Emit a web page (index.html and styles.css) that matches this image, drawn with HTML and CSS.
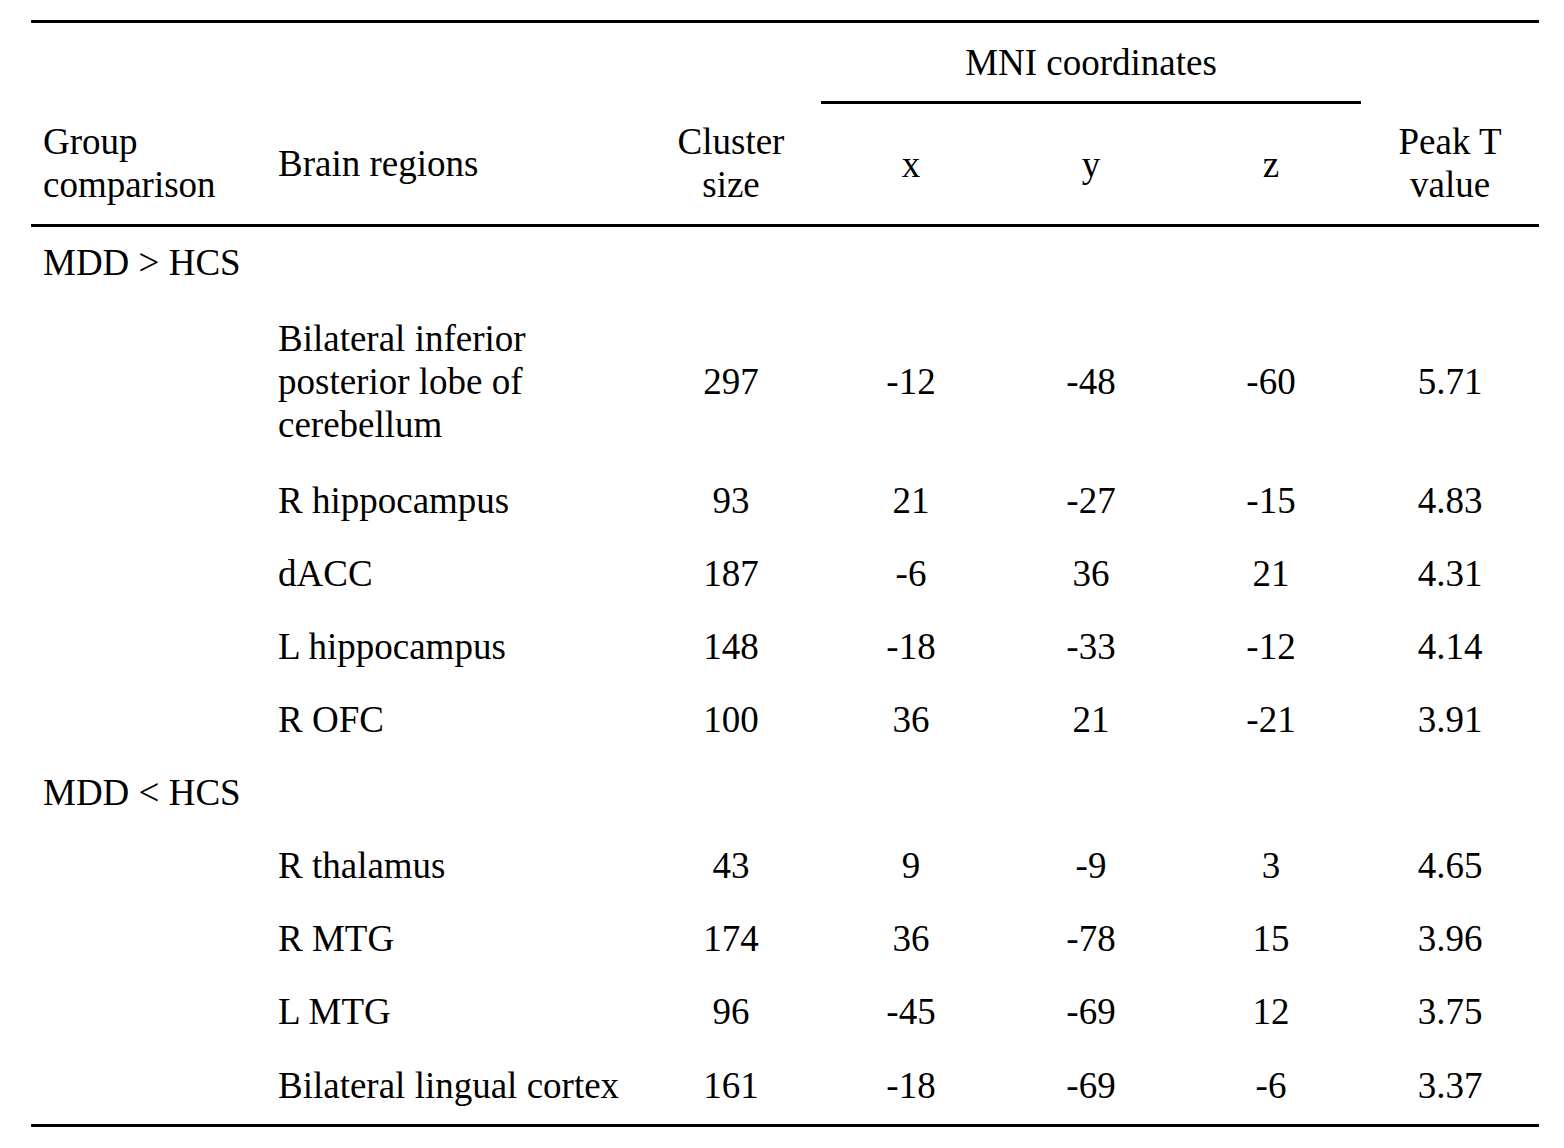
FILE: index.html
```html
<!DOCTYPE html>
<html>
<head>
<meta charset="utf-8">
<link rel="stylesheet" href="styles.css">
</head>
<body>
<table class="results">
  <colgroup>
    <col class="c-group">
    <col class="c-region">
    <col class="c-num">
    <col class="c-num">
    <col class="c-num">
    <col class="c-num">
    <col class="c-peak">
  </colgroup>
  <thead>
    <tr class="head-top">
      <th></th>
      <th></th>
      <th></th>
      <th class="mni" colspan="3">MNI coordinates</th>
      <th></th>
    </tr>
    <tr class="head-sub">
      <th class="left">Group comparison</th>
      <th class="left">Brain regions</th>
      <th>Cluster size</th>
      <th>x</th>
      <th>y</th>
      <th>z</th>
      <th>Peak T value</th>
    </tr>
  </thead>
  <tbody>
    <tr class="group-row">
      <td class="left">MDD &gt; HCS</td>
      <td></td><td></td><td></td><td></td><td></td><td></td>
    </tr>
    <tr class="tall">
      <td></td>
      <td class="left">Bilateral inferior posterior lobe of cerebellum</td>
      <td>297</td><td>-12</td><td>-48</td><td>-60</td><td>5.71</td>
    </tr>
    <tr>
      <td></td>
      <td class="left">R hippocampus</td>
      <td>93</td><td>21</td><td>-27</td><td>-15</td><td>4.83</td>
    </tr>
    <tr>
      <td></td>
      <td class="left">dACC</td>
      <td>187</td><td>-6</td><td>36</td><td>21</td><td>4.31</td>
    </tr>
    <tr>
      <td></td>
      <td class="left">L hippocampus</td>
      <td>148</td><td>-18</td><td>-33</td><td>-12</td><td>4.14</td>
    </tr>
    <tr>
      <td></td>
      <td class="left">R OFC</td>
      <td>100</td><td>36</td><td>21</td><td>-21</td><td>3.91</td>
    </tr>
    <tr class="group-row">
      <td class="left">MDD &lt; HCS</td>
      <td></td><td></td><td></td><td></td><td></td><td></td>
    </tr>
    <tr>
      <td></td>
      <td class="left">R thalamus</td>
      <td>43</td><td>9</td><td>-9</td><td>3</td><td>4.65</td>
    </tr>
    <tr>
      <td></td>
      <td class="left">R MTG</td>
      <td>174</td><td>36</td><td>-78</td><td>15</td><td>3.96</td>
    </tr>
    <tr>
      <td></td>
      <td class="left">L MTG</td>
      <td>96</td><td>-45</td><td>-69</td><td>12</td><td>3.75</td>
    </tr>
    <tr class="last">
      <td></td>
      <td class="left">Bilateral lingual cortex</td>
      <td>161</td><td>-18</td><td>-69</td><td>-6</td><td>3.37</td>
    </tr>
  </tbody>
</table>
</body>
</html>
```

FILE: styles.css
```css
html, body {
  margin: 0;
  padding: 0;
  background: #ffffff;
}

body {
  padding: 20px 0 0 31px;
  font-family: "Liberation Serif", "Times New Roman", serif;
  font-size: 37px;
  line-height: 43px;
  color: #000000;
}

.results {
  border-collapse: collapse;
  table-layout: fixed;
  width: 1508px;
  border-top: 3px solid #000;
  border-bottom: 3px solid #000;
}

.c-group { width: 235px; }
.c-region { width: 375px; }
.c-num { width: 180px; }
.c-peak { width: 178px; }

.results th,
.results td {
  font-weight: normal;
  text-align: center;
  vertical-align: middle;
  padding: 15px 12px;
}

.results .left {
  text-align: left;
}

.head-top th {
  height: 81px;
  padding: 0 12px;
  box-sizing: border-box;
}

.head-top th.mni {
  border-bottom: 3px solid #000;
}

.head-sub th {
  height: 123px;
  padding: 0 12px;
  box-sizing: border-box;
}

.head-sub {
  border-bottom: 3px solid #000;
}

.results tbody td {
  height: 73px;
  padding: 0 12px;
  box-sizing: border-box;
}

.results tbody tr.tall td {
  height: 165px;
}

.results tbody tr.last td {
  height: 78px;
}
```
